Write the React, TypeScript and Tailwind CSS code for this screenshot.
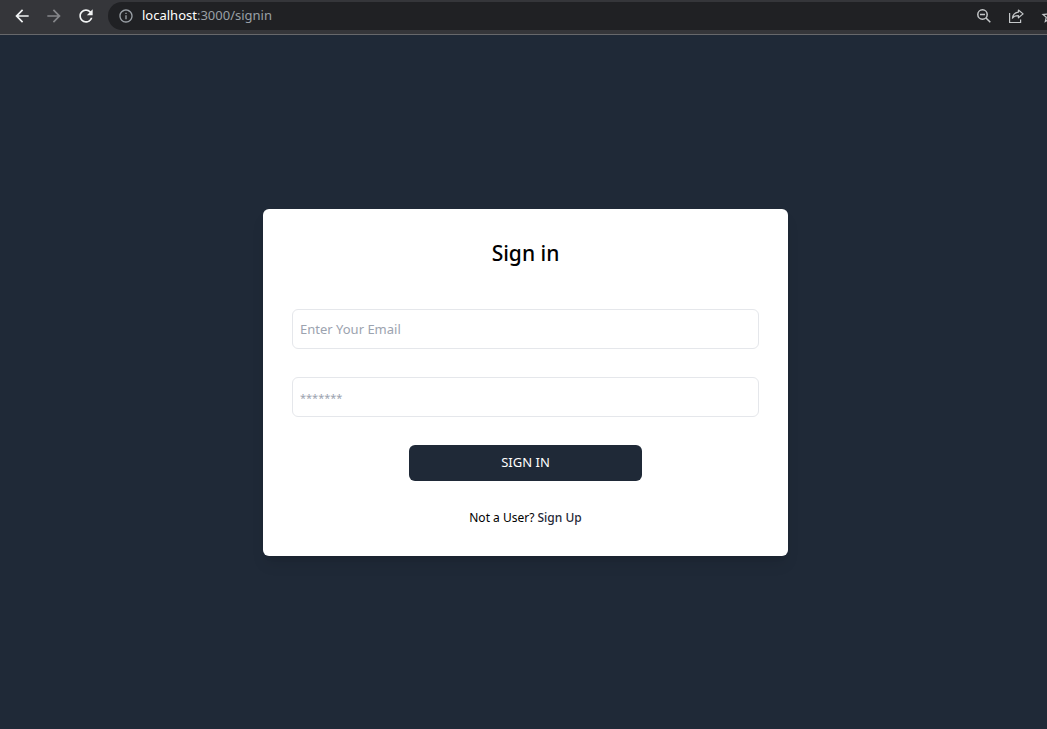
import { useState, type FormEvent } from 'react';
import {
  MdArrowBack,
  MdArrowForward,
  MdInfoOutline,
  MdRefresh,
  MdStarBorder,
} from 'react-icons/md';

function ZoomOutIcon() {
  return (
    <svg width="16" height="16" viewBox="0 0 16 16" fill="none" stroke="currentColor" strokeWidth="1.5">
      <circle cx="6.5" cy="6.5" r="4.7" />
      <path d="M4 6.5h5M10 10l4.3 4.3" />
    </svg>
  );
}

function ShareIcon() {
  return (
    <svg width="16" height="16" viewBox="0 0 16 16" fill="none" stroke="currentColor" strokeWidth="1.2">
      <path d="M1.6 5v9.5h11V11.5" />
      <path d="M10.4 2l4.7 3.9-4.7 3.9V7.7c-2.8 0-4.8.7-6 2.5.4-3.5 2.6-5.6 6-6.1z" strokeLinejoin="round" />
    </svg>
  );
}

function BrowserBar() {
  return (
    <header className="flex h-[35px] items-start overflow-hidden border-b border-[#67686b] bg-[#35363a] pl-3 pt-[2px] text-[#f1f3f4]">
      <nav className="flex h-7 shrink-0 items-center gap-3">
        <button type="button" aria-label="Back">
          <MdArrowBack size={20} />
        </button>
        <button type="button" aria-label="Forward" className="text-[#85868a]">
          <MdArrowForward size={20} />
        </button>
        <button type="button" aria-label="Reload">
          <MdRefresh size={20} />
        </button>
      </nav>
      <div className="ml-3 flex h-7 min-w-0 flex-1 items-center rounded-l-full bg-[#202124] pl-[10px] text-[#9aa0a6]">
        <MdInfoOutline size={16} className="shrink-0" />
        <p className="ml-2 flex-1 text-[13px]">
          <span className="text-white">localhost</span>:3000/signin
        </p>
        <div className="-mr-[11px] flex shrink-0 items-center gap-4 text-[#c4c7c9]">
          <button type="button" aria-label="Zoom">
            <ZoomOutIcon />
          </button>
          <button type="button" aria-label="Share">
            <ShareIcon />
          </button>
          <button type="button" aria-label="Bookmark">
            <MdStarBorder size={18} />
          </button>
        </div>
      </div>
    </header>
  );
}

const inputClass =
  'h-10 w-full rounded-md border border-gray-200 bg-white px-[7px] text-[13px] text-gray-800 placeholder:text-[#9ca3af] focus:outline-none';

function SignInForm() {
  const [email, setEmail] = useState('');
  const [password, setPassword] = useState('');

  const handleSubmit = (e: FormEvent) => {
    e.preventDefault();
  };

  return (
    <form
      onSubmit={handleSubmit}
      className="flex w-full max-w-[525px] flex-col items-center rounded-md bg-white p-[29px] text-black shadow-lg"
    >
      <h1 className="mb-[41px] text-[21px] font-medium leading-[30px]">Sign in</h1>
      <div className="flex w-full flex-col items-center gap-7">
        <input
          type="email"
          aria-label="Email"
          placeholder="Enter Your Email"
          value={email}
          onChange={(e) => setEmail(e.target.value)}
          className={inputClass}
        />
        <input
          type="password"
          aria-label="Password"
          placeholder="*******"
          value={password}
          onChange={(e) => setPassword(e.target.value)}
          className={`${inputClass} placeholder:text-[11px]`}
        />
        <button type="submit" className="h-9 w-1/2 rounded-md bg-[#1f2937] text-[13px] text-white">
          SIGN IN
        </button>
        <p className="text-xs leading-[18px]">
          Not a User?{' '}
          <a href="/signup" className="font-medium text-[#1f2937]">
            Sign Up
          </a>
        </p>
      </div>
    </form>
  );
}

export default function App() {
  return (
    <div className="flex min-h-screen flex-col bg-[#1f2937] font-['Noto_Sans','Open_Sans',sans-serif]">
      <BrowserBar />
      <main className="flex flex-1 items-center justify-center pl-1">
        <SignInForm />
      </main>
    </div>
  );
}
